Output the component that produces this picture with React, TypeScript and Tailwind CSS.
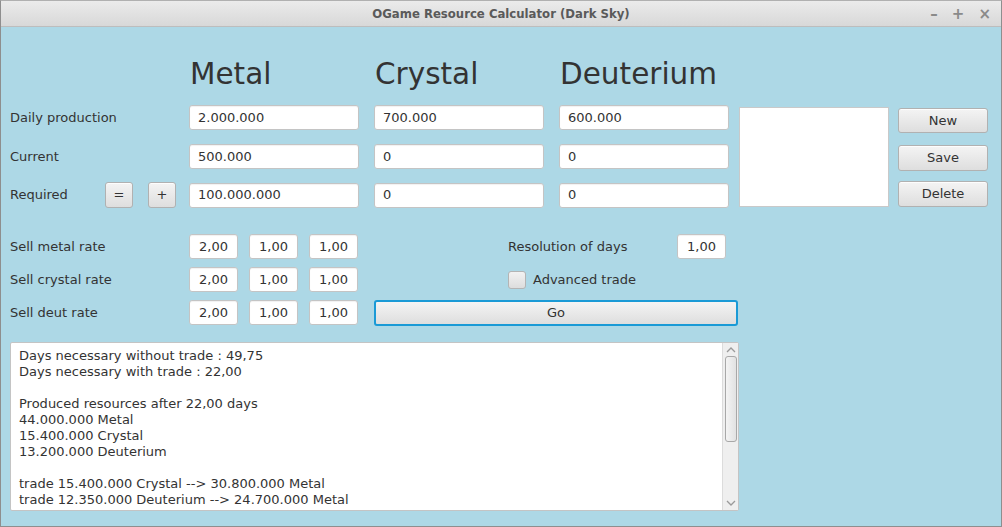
import React from "react";

const font = { fontFamily: '"DejaVu Sans", "Liberation Sans", sans-serif' };

const fieldClass =
  "h-[25px] bg-white border border-[#c4c4c4] rounded-[3px] px-[8px] text-[13px] text-[#333333] flex items-center shadow-[inset_0_1px_1px_rgba(0,0,0,0.06)]";
const btnClass =
  "h-[25px] border border-[#b1b1b1] rounded-[3px] bg-gradient-to-b from-[#f4f4f4] to-[#dedede] text-[13px] text-[#333333] flex items-center justify-center shadow-[inset_0_1px_0_rgba(255,255,255,0.8)]";

function Field({ value, className = "" }: { value: string; className?: string }) {
  return <div className={`${fieldClass} ${className}`}>{value}</div>;
}

function SmallField({ value }: { value: string }) {
  return <div className={`${fieldClass} w-[49px] justify-center px-0`}>{value}</div>;
}

const output = [
  "Days necessary without trade : 49,75",
  "Days necessary with trade : 22,00",
  "",
  "Produced resources after 22,00 days",
  "44.000.000 Metal",
  "15.400.000 Crystal",
  "13.200.000 Deuterium",
  "",
  "trade 15.400.000 Crystal --> 30.800.000 Metal",
  "trade 12.350.000 Deuterium --> 24.700.000 Metal",
];

export default function App() {
  return (
    <div className="w-[1002px] h-[527px] flex flex-col overflow-hidden border border-[#8e8e8e] border-t-[#b0b0b0]" style={font}>
      {/* title bar */}
      <div className="h-[26px] shrink-0 flex items-center bg-gradient-to-b from-[#ebebeb] to-[#d8d8d8] border-b border-[#bdbdbd] relative">
        <div
          className="flex-1 text-center text-[13px] font-bold text-[#5a5a5a]"
          style={{ fontFamily: '"DejaVu Sans Condensed", "DejaVu Sans", sans-serif' }}
        >
          OGame Resource Calculator (Dark Sky)
        </div>
        <div className="absolute right-[10px] top-[5px] flex gap-[14px] text-[#8a8a8a] text-[15px] font-bold leading-[16px]">
          <span>–</span>
          <span>+</span>
          <span>×</span>
        </div>
      </div>

      {/* content */}
      <div className="flex-1 bg-[#add8e6] pl-[8px] pt-[29px]">
        {/* upper block */}
        <div className="flex">
          <div className="w-[720px]">
            <div className="flex h-[49px] text-[29.5px] leading-[36px] text-[#333333]">
              <div className="w-[181px]" />
              <div className="w-[185px]">Metal</div>
              <div className="w-[185px]">Crystal</div>
              <div>Deuterium</div>
            </div>
            {[
              ["Daily production", "2.000.000", "700.000", "600.000"],
              ["Current", "500.000", "0", "0"],
              ["Required", "100.000.000", "0", "0"],
            ].map((row, i) => (
              <div key={i} className={`flex items-center ${i === 1 ? "mt-[14px]" : i === 2 ? "mt-[13px]" : ""}`}>
                <div className="w-[180px] flex items-center text-[13px] text-[#333333] pl-[1px]">
                  <span className="w-[95px] whitespace-nowrap">{row[0]}</span>
                  {i === 2 && (
                    <>
                      <div className={`${btnClass} w-[28px] h-[26px]`}>=</div>
                      <div className={`${btnClass} w-[28px] h-[26px] ml-[15px]`}>+</div>
                    </>
                  )}
                </div>
                <Field value={row[1]} className="w-[170px]" />
                <Field value={row[2]} className="w-[170px] ml-[15px]" />
                <Field value={row[3]} className="w-[170px] ml-[15px]" />
              </div>
            ))}
          </div>
          <div className="ml-[10px] mt-[51px] w-[150px] h-[100px] bg-white border border-[#c9c9c9]" />
          <div className="ml-[9px] mt-[52px] w-[90px] flex flex-col">
            <div className={`${btnClass} h-[25px]`}>New</div>
            <div className={`${btnClass} h-[26px] mt-[12px]`}>Save</div>
            <div className={`${btnClass} h-[26px] mt-[10px]`}>Delete</div>
          </div>
        </div>

        {/* rates block */}
        <div className="mt-[26px] grid grid-cols-[169px_49px_49px_49px_369px] gap-x-[11px] gap-y-[8px] w-[730px] text-[13px] text-[#333333]">
          <div className="flex items-center pl-[1px]">Sell metal rate</div>
          <SmallField value="2,00" />
          <SmallField value="1,00" />
          <SmallField value="1,00" />
          <div className="flex items-center ml-[5px]">
            <span className="ml-[134px] w-[169px] whitespace-nowrap">Resolution of days</span>
            <SmallField value="1,00" />
          </div>

          <div className="flex items-center pl-[1px]">Sell crystal rate</div>
          <SmallField value="2,00" />
          <SmallField value="1,00" />
          <SmallField value="1,00" />
          <div className="flex items-center ml-[5px]">
            <div className="ml-[134px] w-[18px] h-[18px] rounded-[3px] border border-[#b4b4b4] bg-gradient-to-b from-[#f2f2f2] to-[#dddddd]" />
            <span className="ml-[7px]">Advanced trade</span>
          </div>

          <div className="flex items-center pl-[1px]">Sell deut rate</div>
          <SmallField value="2,00" />
          <SmallField value="1,00" />
          <SmallField value="1,00" />
          <div className="ml-[5px] h-[26px] rounded-[3px] border-2 border-[#1a9ad6] bg-gradient-to-b from-[#f4f4f4] to-[#dedede] flex items-center justify-center">
            Go
          </div>
        </div>

        {/* output */}
        <div className="mt-[16px] ml-[1px] w-[729px] h-[169px] bg-white border border-[#c4c4c4] rounded-[2px] flex">
          <div className="flex-1 pl-[8px] pt-[5px] text-[13px] leading-[16px] text-[#333333] whitespace-pre">
            {output.map((l, i) => (
              <div key={i} className="h-[16px]">{l}</div>
            ))}
          </div>
          <div className="w-[16px] border-l border-[#dcdcdc] bg-[#efefef] flex flex-col items-center">
            <svg width="12" height="10" viewBox="0 0 12 10" className="mt-[2px]">
              <path d="M2 7 L6 3 L10 7" stroke="#9a9a9a" strokeWidth="1.3" fill="none" />
            </svg>
            <div className="w-[12px] h-[86px] mt-[1px] rounded-[3px] border border-[#a8a8a8] bg-gradient-to-r from-[#f4f4f4] to-[#e2e2e2]" />
            <div className="flex-1" />
            <svg width="12" height="10" viewBox="0 0 12 10" className="mb-[2px]">
              <path d="M2 3 L6 7 L10 3" stroke="#9a9a9a" strokeWidth="1.3" fill="none" />
            </svg>
          </div>
        </div>
      </div>
    </div>
  );
}
